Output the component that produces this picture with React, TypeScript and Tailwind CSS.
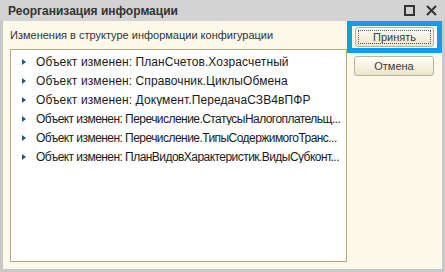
import React from "react";

const rows: { text: string; cls: string }[] = [
  { text: "Объект изменен: ПланСчетов.Хозрасчетный", cls: "tracking-[0.1px]" },
  { text: "Объект изменен: Справочник.ЦиклыОбмена", cls: "tracking-[0.1px]" },
  { text: "Объект изменен: Документ.ПередачаСЗВ4вПФР", cls: "tracking-[0.1px]" },
  { text: "Объект изменен: Перечисление.СтатусыНалогоплательщ...", cls: "tracking-[-0.55px]" },
  { text: "Объект изменен: Перечисление.ТипыСодержимогоТранс...", cls: "tracking-[-0.55px]" },
  { text: "Объект изменен: ПланВидовХарактеристик.ВидыСубконт...", cls: "tracking-[-0.55px]" },
];

export default function App() {
  return (
    <div
      className="w-[445px] h-[272px] bg-[#c8c8c8] flex flex-col overflow-hidden"
      style={{ fontFamily: '"Liberation Sans", Arial, sans-serif' }}
    >
      {/* title bar */}
      <div className="h-[21px] bg-[#d3d3d3] flex items-center pl-[8px] pr-[8px] shrink-0">
        <div className="text-[12px] font-bold text-[#333333] leading-none flex-1">
          Реорганизация информации
        </div>
        <svg width="11" height="11" viewBox="0 0 11 11" className="mr-[11px]">
          <rect x="1" y="1" width="9" height="9" fill="none" stroke="#333" strokeWidth="2" />
        </svg>
        <svg width="11" height="11" viewBox="0 0 11 11">
          <path d="M1 1 L10 10 M10 1 L1 10" stroke="#333" strokeWidth="2" />
        </svg>
      </div>
      {/* content */}
      <div className="flex-1 mx-[3px] mb-[3px] bg-[#fcf9ea] flex">
        <div className="w-[344px] flex flex-col pl-[7px] pb-[7px]">
          <div className="h-[28px] flex items-center text-[11px] text-[#333333] leading-none">
            Изменения в структуре информации конфигурации
          </div>
          <div className="flex-1 bg-white border border-[#b3ac7e] pt-[2px] pr-[2px]">
            {rows.map((r) => (
              <div key={r.text} className="h-[19px] flex items-center">
                <svg width="4" height="6" viewBox="0 0 4 6" className="ml-[11px] mr-[10px] shrink-0">
                  <path d="M0 0 L4 3 L0 6 Z" fill="#24557e" />
                </svg>
                <span className={`text-[12px] text-[#1a1a1a] leading-none whitespace-nowrap overflow-hidden ${r.cls}`}>
                  {r.text}
                </span>
              </div>
            ))}
          </div>
        </div>
        <div className="w-[95px] flex flex-col">
          <div className="h-[32px] border-[5px] border-[#0ea0e3] flex items-center justify-center">
            <button className="w-[79px] h-[20px] rounded-[3px] border border-[#b9b397] bg-gradient-to-b from-[#fffef9] to-[#ebe5cb] p-[2px] flex">
              <div className="flex-1 border border-dotted border-[#555] flex items-center justify-center text-[11px] text-[#3a3a3a] leading-none">
                Принять
              </div>
            </button>
          </div>
          <div className="pl-[7px] pt-[3px]">
            <button className="w-[80px] h-[20px] rounded-[3px] border border-[#b9b397] bg-gradient-to-b from-[#fffef9] to-[#ebe5cb] flex items-center justify-center text-[11px] text-[#3a3a3a] leading-none">
              Отмена
            </button>
          </div>
        </div>
      </div>
    </div>
  );
}
